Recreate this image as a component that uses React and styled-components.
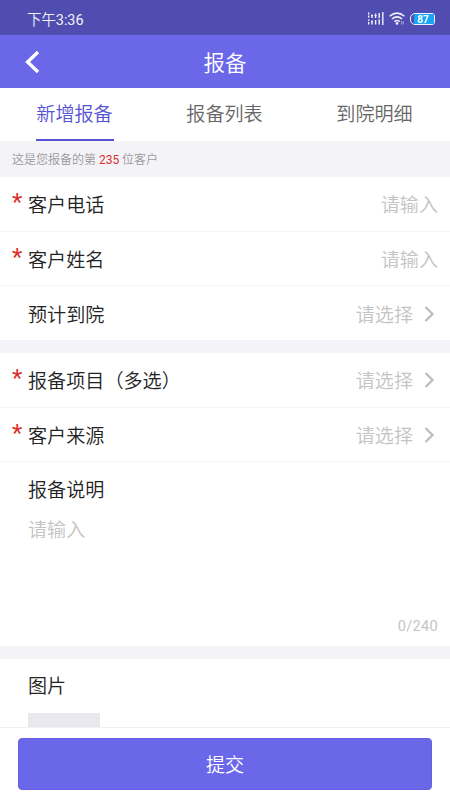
import React from "react";
import styled, { createGlobalStyle } from "styled-components";

const GlobalStyle = createGlobalStyle`
  * {
    box-sizing: border-box;
  }

  body {
    margin: 0;
    background-color: #fff;
  }
`;

const Page = styled.div`
  display: flex;
  flex-direction: column;
  width: 450px;
  height: 800px;
  overflow: hidden;
  background-color: #f3f3f8;
  color: #222;
  font-family: Roboto, "Noto Sans CJK SC", sans-serif;
  font-size: 19.1px;
  font-weight: 350;
`;

const StatusBar = styled.div`
  display: flex;
  align-items: center;
  justify-content: space-between;
  flex: none;
  height: 35px;
  padding: 2px 15px 0 27px;
  background-color: #504db0;
  color: #f0f0fa;
  font-size: 14.4px;

  em {
    font-style: normal;
    font-weight: 400;
  }
`;

const StatusIcons = styled.div`
  display: flex;
  align-items: center;
  gap: 5px;

  svg {
    display: block;
  }
`;

const Battery = styled.div`
  width: 25px;
  height: 12px;
  padding: 0 0 0 3px;
  border: solid 1px #f0f0fa;
  border-radius: 5px 3px 3px 5px;
`;

const BatteryLevel = styled.div`
  height: 10px;
  padding-right: 2px;
  border-radius: 1px;
  background-color: #18a5f5;
  color: #fff;
  font-size: 10px;
  font-weight: bold;
  line-height: 11px;
  text-align: center;
`;

const Header = styled.header`
  display: grid;
  grid-template-columns: 64px 1fr 64px;
  align-items: center;
  flex: none;
  height: 53px;
  background-color: #6a67e9;
  color: #fff;
`;

const BackButton = styled.button`
  display: flex;
  padding: 0 0 0 24px;
  border: none;
  background: none;
  color: inherit;
`;

const Title = styled.h1`
  margin: 0;
  font-size: 21.5px;
  font-weight: 350;
  text-align: center;
`;

const Tabs = styled.nav`
  display: flex;
  flex: none;
  height: 53px;
  background-color: #fff;
`;

const Tab = styled.div`
  display: flex;
  justify-content: center;
  flex: 1;

  span {
    height: 53px;
    padding: 1px 1px 0 0;
    border-bottom: solid 2px ${({ $active }) => ($active ? "#5552d4" : "transparent")};
    color: ${({ $active }) => ($active ? "#5552d4" : "#666")};
    line-height: 51px;
  }
`;

const Notice = styled.div`
  flex: none;
  height: 36px;
  padding: 1px 0 0 12px;
  color: #999;
  font-size: 12px;
  line-height: 36px;

  em {
    color: #d9302c;
    font-style: normal;
    font-weight: 400;
  }
`;

const Group = styled.section`
  flex: none;
  margin-bottom: 13px;
  background-color: #fff;
`;

const Row = styled.div`
  display: flex;
  align-items: center;
  height: ${({ $last }) => ($last ? "54px" : "54.5px")};
  padding-top: 1px;
  padding-right: 12px;
  border-bottom: ${({ $last }) => ($last ? "none" : "solid 1px #f4f4f5")};
`;

const Required = styled.span`
  width: 28px;
  margin-top: -4px;
  padding-left: 12px;
  color: #d9302c;
  font-size: 24px;
  font-weight: 400;
`;

const Label = styled.span`
  flex: 1;
`;

const Hint = styled.span`
  color: #c4c4c4;
`;

const Arrow = styled.svg`
  flex: none;
  margin: 0 3px 0 11px;
`;

const Memo = styled.div`
  display: flex;
  flex-direction: column;
  height: 183.5px;
  padding: 15px 12px 10px 28px;
  line-height: 28px;

  ${Hint} {
    flex: 1;
    margin-top: 12px;
  }
`;

const Counter = styled.span`
  align-self: flex-end;
  color: #c4c4c4;
  font-size: 14.6px;
  font-weight: 400;
  line-height: 20px;
  letter-spacing: 0.3px;
`;

const Pictures = styled.section`
  display: flex;
  flex-direction: column;
  flex: 1;
  min-height: 0;
  padding: 14px 0 0 28px;
  overflow: hidden;
  background-color: #fff;
  line-height: 28px;
`;

const AddPicture = styled.div`
  flex: none;
  width: 72px;
  height: 72px;
  margin-top: 12px;
  background-color: #e9e8ee;
`;

const Footer = styled.footer`
  flex: none;
  height: 73px;
  padding: 10px 18px;
  border-top: solid 1px #f0f0f2;
  background-color: #fff;
`;

const SubmitButton = styled.button`
  display: block;
  width: 100%;
  height: 52px;
  padding: 0;
  border: solid 1px #6360e4;
  border-radius: 4px;
  background-color: #6a67e9;
  color: #fff;
  font-family: inherit;
  font-size: 19.1px;
  font-weight: 350;
`;

const customerFields = [
  { label: "客户电话", required: true },
  { label: "客户姓名", required: true },
  { label: "预计到院", select: true },
];

const projectFields = [
  { label: "报备项目（多选）", required: true, select: true },
  { label: "客户来源", required: true, select: true },
];

// two stacked rows of bars, one per SIM card
const SignalIcon = () => (
  <svg width="17" height="13" viewBox="0 0 17 13" fill="none" stroke="#f0f0fa" strokeWidth="1.4">
    <path d="M1.7 0.5v2M1.7 3.5v2M5 2.5v3.5M8.6 1.5V6M12.2 1V6M15.8 0v13" />
    <path d="M1.7 7.5V9M1.7 10v2.5M5 8.5v4M8.6 8v4.5M12.2 7.3v5.2" />
    <path d="M4 3.5h2M7.6 3.5h2M4 9.5h2" strokeWidth="1" />
  </svg>
);

const WifiIcon = () => (
  <svg width="16" height="13" viewBox="0 0 16 13" fill="none" stroke="#f0f0fa" strokeWidth="1.5">
    <path d="M0.6 4.2Q8 -2 15.4 4.2M2.9 7Q8 2.7 13.1 7M5.3 9.6Q8 7.4 10.7 9.6" />
    <circle cx="8" cy="11.4" r="1.3" fill="#f0f0fa" stroke="none" />
    <path d="M12.6 9v3.5M14.3 9v3.5" strokeWidth="0.9" opacity="0.6" />
  </svg>
);

const FieldRow = ({ field, last }) => {
  const { label, required, select } = field;

  return (
    <Row $last={last}>
      <Required>{required && "*"}</Required>
      <Label>{label}</Label>
      <Hint>{select ? "请选择" : "请输入"}</Hint>
      {select && (
        <Arrow width="11" height="16" viewBox="0 0 11 16" fill="none" stroke="#bdbdbd" strokeWidth="2.3">
          <path d="M1.5 1L8.5 8l-7 7" />
        </Arrow>
      )}
    </Row>
  );
};

const App = () => {
  return (
    <Page>
      <GlobalStyle />
      <StatusBar>
        <span>下午<em>3:36</em></span>
        <StatusIcons>
          <SignalIcon />
          <WifiIcon />
          <Battery>
            <BatteryLevel>87</BatteryLevel>
          </Battery>
        </StatusIcons>
      </StatusBar>
      <Header>
        <BackButton aria-label="返回">
          <svg width="16" height="24" viewBox="0 0 16 24" fill="none" stroke="currentColor" strokeWidth="3.4">
            <path d="M14 2L3.6 12 14 22" />
          </svg>
        </BackButton>
        <Title>报备</Title>
      </Header>
      <Tabs>
        <Tab $active><span>新增报备</span></Tab>
        <Tab><span>报备列表</span></Tab>
        <Tab><span>到院明细</span></Tab>
      </Tabs>
      <Notice>
        这是您报备的第 <em>235</em> 位客户
      </Notice>
      <Group>
        {customerFields.map((field, i) => (
          <FieldRow key={field.label} field={field} last={i === customerFields.length - 1} />
        ))}
      </Group>
      <Group>
        {projectFields.map((field) => (
          <FieldRow key={field.label} field={field} />
        ))}
        <Memo>
          <span>报备说明</span>
          <Hint>请输入</Hint>
          <Counter>0/240</Counter>
        </Memo>
      </Group>
      <Pictures>
        <span>图片</span>
        <AddPicture />
      </Pictures>
      <Footer>
        <SubmitButton>提交</SubmitButton>
      </Footer>
    </Page>
  );
};

export default App;
